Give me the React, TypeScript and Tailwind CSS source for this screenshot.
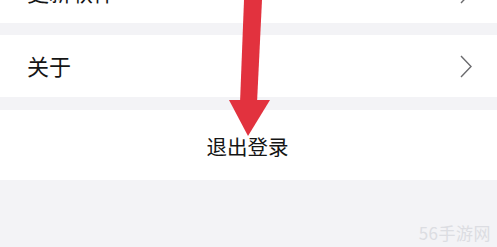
const Chevron = () => (
  <svg width="12" height="23" viewBox="0 0 12 23" fill="none">
    <path d="M1 1 L11 11.5 L1 22" stroke="#6b6b6e" strokeWidth="1.4" strokeLinejoin="miter" />
  </svg>
);

const Row = ({ label }: { label: string }) => (
  <div className="h-[62px] shrink-0 flex items-center justify-between pl-[27px] pr-[25px] bg-white">
    <span className="text-[22px] leading-none text-[#151515] mt-[-3px]">{label}</span>
    <Chevron />
  </div>
);

export default function App() {
  return (
    <div
      className="relative w-[497px] h-[247px] overflow-hidden bg-[#f3f3f6]"
      style={{ fontFamily: '"Noto Sans CJK SC", "Noto Sans", sans-serif' }}
    >
      <div className="flex flex-col">
        <div className="h-[23px] overflow-hidden flex flex-col justify-end bg-white">
          <Row label="更新软件" />
        </div>
        <div className="h-[12px]" />
        <Row label="关于" />
        <div className="h-[13px]" />
        <div className="h-[70px] bg-white flex items-center justify-center pt-[2px]">
          <span className="text-[20.5px] leading-none text-[#151515] ml-[-2px]">退出登录</span>
        </div>
      </div>

      <svg className="absolute left-0 top-0" width="497" height="247" viewBox="0 0 497 247">
        <polygon points="244,0 262,0 257,103 240,103" fill="#e2323e" />
        <polygon points="229,100 270,100 248,136" fill="#e2323e" />
      </svg>

      <div className="absolute right-[6px] bottom-[6px] text-[17px] leading-none text-[#dcdde2] tracking-[0.5px]">
        56手游网
      </div>
    </div>
  );
}
